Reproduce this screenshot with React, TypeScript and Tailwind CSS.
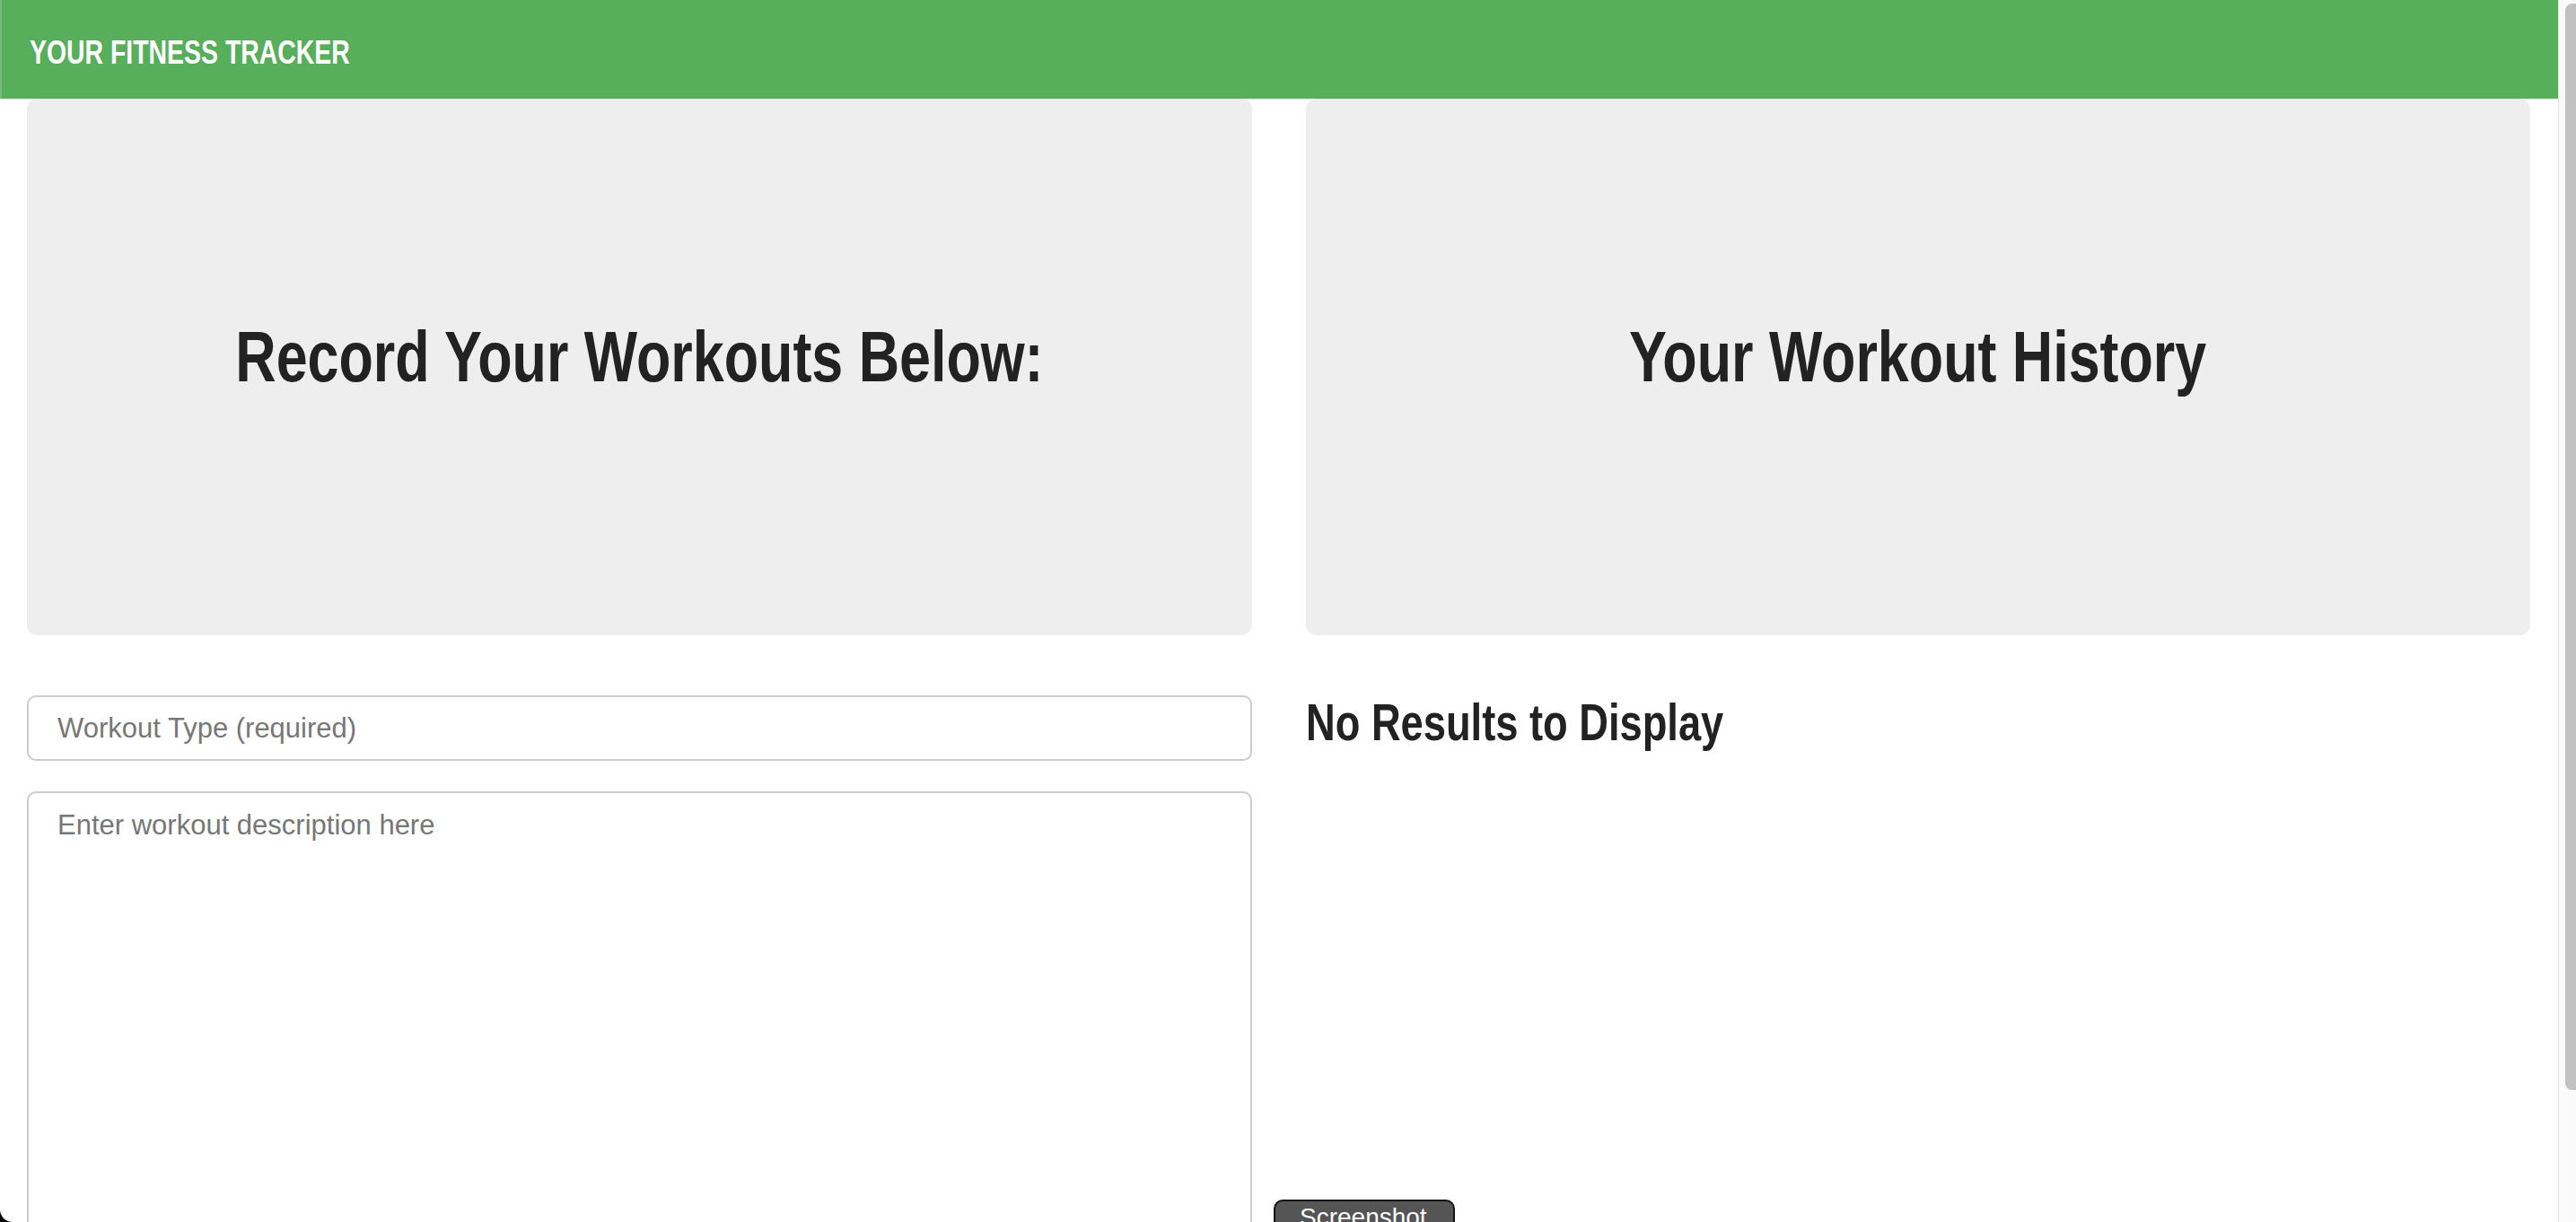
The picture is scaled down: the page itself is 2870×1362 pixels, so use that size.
import React from 'react';

// no narrow face is installed, so Liberation Sans Bold is squeezed horizontally
const narrow = { fontFamily: '"Liberation Sans", Arial, sans-serif' };
const sans = { fontFamily: '"Liberation Sans", Arial, sans-serif' };

const Jumbo = ( { title }: { title: string } ) => (
  <div className="bg-[#eeeeee] rounded-[12px] h-[598px] flex items-center justify-center pb-[22px]">
    <h1 className="text-[80px] font-bold leading-none text-[#222222] whitespace-nowrap scale-x-[0.785] origin-center" style={ narrow }>{ title }</h1>
  </div>
);

const App = () => {
  return (
    <div className="bg-black w-[2870px] h-[1362px] overflow-hidden">
      <div className="relative flex w-full h-full bg-white rounded-bl-[14px] overflow-hidden">

        {/*------------------page*/ }
        <div className="flex-1 flex flex-col min-h-0">
          <div className="shrink-0 h-[110px] bg-[#57ae5b] border-l-2 border-[#74bc77] flex items-center pl-[31px] pt-[6px]">
            <p className="text-white text-[37px] font-bold leading-none whitespace-nowrap scale-x-[0.768] origin-left" style={ narrow }>YOUR FITNESS TRACKER</p>
          </div>

          <div className="shrink-0 grid grid-cols-2 gap-x-[60px] pl-[30px] pr-[31px]">
            <Jumbo title="Record Your Workouts Below:"/>
            <Jumbo title="Your Workout History"/>

            <div className="flex flex-col gap-[34px] pt-[67px]">
              <input
                className="h-[73px] w-full border-2 border-[#cccccc] rounded-[10px] px-[32px] text-[31px] text-[#555] placeholder:text-[#777777] outline-none"
                style={ sans }
                placeholder="Workout Type (required)"/>
              <textarea
                className="h-[620px] w-full border-2 border-[#cccccc] rounded-[10px] px-[32px] py-[14px] text-[31px] leading-[43px] text-[#555] placeholder:text-[#777777] outline-none resize-none"
                style={ sans }
                placeholder="Enter workout description here"/>
            </div>

            <div className="pt-[69px]">
              <h2 className="text-[57px] font-bold leading-none text-[#222222] whitespace-nowrap scale-x-[0.794] origin-left" style={ narrow }>No Results to Display</h2>
            </div>
          </div>
        </div>

        {/*------------------scrollbar*/ }
        <div className="shrink-0 w-[20px] h-full bg-[#fafafa] border-l border-[#e6e6e6] pl-[7px] pt-[4px]">
          <div className="h-[1211px] bg-[#c1c1c1] rounded-l-[8px]"/>
        </div>

        {/*------------------floating button*/ }
        <button
          className="absolute left-[1419px] top-[1337px] w-[202px] h-[60px] bg-[#555555] border-2 border-[#111111] rounded-[10px] text-white text-[28px] text-left pl-[27px] pt-[4px] leading-none flex items-start"
          style={ sans }>
          Screenshot
        </button>
      </div>
    </div>
  );
};

export default App;
